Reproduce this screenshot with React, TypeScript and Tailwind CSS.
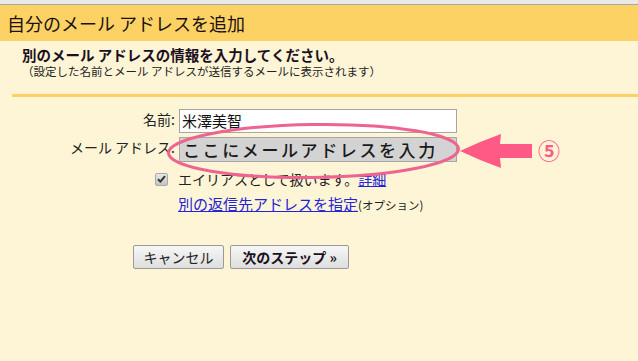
import React from "react";

const FONT = { fontFamily: '"Noto Sans CJK JP", "Liberation Sans", sans-serif' };

export default function App() {
  return (
    <div
      className="relative w-[638px] h-[361px] overflow-hidden bg-[#fef5d7] text-[#222]"
      style={FONT}
    >
      <div className="h-[5px] bg-[#e9e9e9] border-b border-[#a8a8a8]" />
      <div className="h-[36px] bg-[#fcd265] flex items-center pl-[7px] text-[18px] leading-none text-[#1c1010]">
        自分のメール アドレスを追加
      </div>
      <div className="pl-[22px] pt-[6px]">
        <div className="h-[17px] flex items-center text-[14.5px] leading-none font-bold text-[#1c1020]">
          別のメール アドレスの情報を入力してください。
        </div>
        <div className="h-[15px] flex items-center text-[11.5px] leading-none text-[#222]">
          （設定した名前とメール アドレスが送信するメールに表示されます）
        </div>
      </div>
      <div className="ml-[12px] mt-[15px] h-[3px] bg-[#fcd265]" />

      <div className="mt-[12px] grid grid-cols-[175px_278px] gap-x-[4px] gap-y-[4px]">
        <div className="text-right text-[14px] leading-[20px]">名前:</div>
        <div className="h-[24px] bg-white border border-[#a6a6a6] flex items-center pl-[2px] text-[15px] text-[#111]">
          米澤美智
        </div>
        <div className="text-right text-[14px] leading-[20px]">メール アドレス:</div>
        <div className="h-[25px] bg-[#d3d3d3] border border-[#a6a6a6] flex items-center pl-[3px] text-[17px] font-medium tracking-[2.6px] text-[#1a1a1a] whitespace-nowrap overflow-hidden">
          ここにメールアドレスを入力
        </div>
      </div>

      <div className="mt-[8px] ml-[155px] flex items-center h-[18px] gap-[10px]">
        <div className="w-[13px] h-[13px] rounded-[2px] border border-[#a9a9a9] bg-gradient-to-b from-[#e8e8e8] to-[#c4c4c4] flex items-center justify-center">
          <svg width="9" height="8" viewBox="0 0 9 8">
            <path d="M1 4.2 L3.4 6.6 L8 1.2" stroke="#333" strokeWidth="2" fill="none" />
          </svg>
        </div>
        <div className="text-[14px] leading-[18px] whitespace-nowrap">
          エイリアスとして扱います。
          <span className="text-[#2323d8] underline">詳細</span>
        </div>
      </div>

      <div className="mt-[7px] ml-[178px] h-[18px] flex items-baseline whitespace-nowrap">
        <span className="text-[15px] leading-[18px] text-[#2323d8] underline">別の返信先アドレスを指定</span>
        <span className="text-[11.5px] leading-[18px]">(オプション)</span>
      </div>

      <div className="mt-[32px] pl-[133px] flex gap-[6px]">
        <button className="w-[91px] h-[24px] border border-[#9a9a9a] rounded-[2px] bg-gradient-to-b from-[#f7f7f7] to-[#dedede] text-[14px] leading-none text-[#222]">
          キャンセル
        </button>
        <button className="w-[119px] h-[24px] border border-[#9a9a9a] rounded-[2px] bg-gradient-to-b from-[#f7f7f7] to-[#dedede] text-[14px] leading-none font-bold text-[#1c1020]">
          次のステップ »
        </button>
      </div>

      <svg
        className="absolute inset-0 pointer-events-none"
        width="638"
        height="361"
        viewBox="0 0 638 361"
      >
        <ellipse
          cx="313.5"
          cy="151"
          rx="145"
          ry="26.5"
          fill="none"
          stroke="#ee6490"
          strokeWidth="3"
          transform="rotate(-0.8 313.5 151)"
        />
        <path
          d="M460 151 Q481 141 501 134 L500 144 L532 144 L532 158 L500 158 L501 168 Q481 161 460 151 Z"
          fill="#ff5a85"
        />
      </svg>
      <div className="absolute left-[538px] top-[136px] text-[22px] leading-[26px] font-bold text-[#ff5a85]">
        ⑤
      </div>
    </div>
  );
}
